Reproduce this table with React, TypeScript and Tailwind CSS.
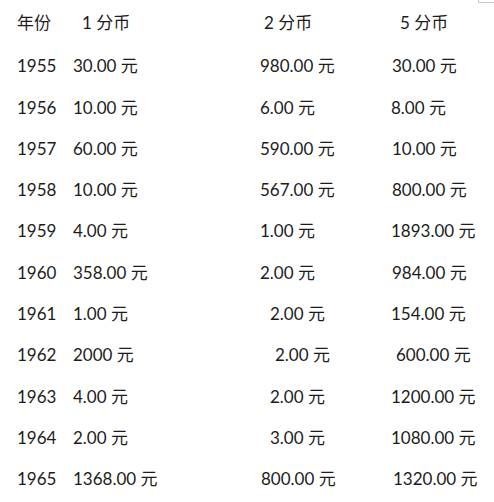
const rows: { year: string; a: string; b: string; bPad: string; c: string; cPad: string }[] = [
  { year: "1955", a: "30.00 元", b: "980.00 元", bPad: "pl-0", c: "30.00 元", cPad: "pl-px" },
  { year: "1956", a: "10.00 元", b: "6.00 元", bPad: "pl-0", c: "8.00 元", cPad: "pl-0" },
  { year: "1957", a: "60.00 元", b: "590.00 元", bPad: "pl-0", c: "10.00 元", cPad: "pl-px" },
  { year: "1958", a: "10.00 元", b: "567.00 元", bPad: "pl-0", c: "800.00 元", cPad: "pl-px" },
  { year: "1959", a: "4.00 元", b: "1.00 元", bPad: "pl-0", c: "1893.00 元", cPad: "pl-0" },
  { year: "1960", a: "358.00 元", b: "2.00 元", bPad: "pl-0", c: "984.00 元", cPad: "pl-px" },
  { year: "1961", a: "1.00 元", b: "2.00 元", bPad: "pl-[10px]", c: "154.00 元", cPad: "pl-0" },
  { year: "1962", a: "2000 元", b: "2.00 元", bPad: "pl-[15px]", c: "600.00 元", cPad: "pl-[5px]" },
  { year: "1963", a: "4.00 元", b: "2.00 元", bPad: "pl-[10px]", c: "1200.00 元", cPad: "pl-0" },
  { year: "1964", a: "2.00 元", b: "3.00 元", bPad: "pl-[10px]", c: "1080.00 元", cPad: "pl-0" },
  { year: "1965", a: "1368.00 元", b: "800.00 元", bPad: "pl-px", c: "1320.00 元", cPad: "pl-[2px]" },
];

export default function App() {
  return (
    <div
      className="relative w-[494px] h-[502px] bg-white text-[#1c1c1c] text-[17px] overflow-hidden"
      style={{ fontFamily: 'Lato, "Noto Sans CJK SC", sans-serif' }}
    >
      <div className="absolute right-0 top-0 w-[16px] h-[3px] border-l border-b border-[#c8c8c8]" />
      <div className="flex flex-col pt-[11px] pl-[17px]">
        <div className="flex h-[24px] items-center">
          <div className="w-[56px]">年份</div>
          <div className="w-[187px] pl-[9px]">1 分币</div>
          <div className="w-[131px] pl-[4px]">2 分币</div>
          <div className="pl-[9px]">5 分币</div>
        </div>
        {rows.map((r, i) => (
          <div key={r.year} className={`flex h-[24px] items-center ${i === 0 ? "mt-[19px]" : "mt-[17.3px]"}`}>
            <div className="w-[56px]">{r.year}</div>
            <div className="w-[187px]">{r.a}</div>
            <div className={`w-[131px] ${r.bPad}`}>{r.b}</div>
            <div className={r.cPad}>{r.c}</div>
          </div>
        ))}
      </div>
    </div>
  );
}
